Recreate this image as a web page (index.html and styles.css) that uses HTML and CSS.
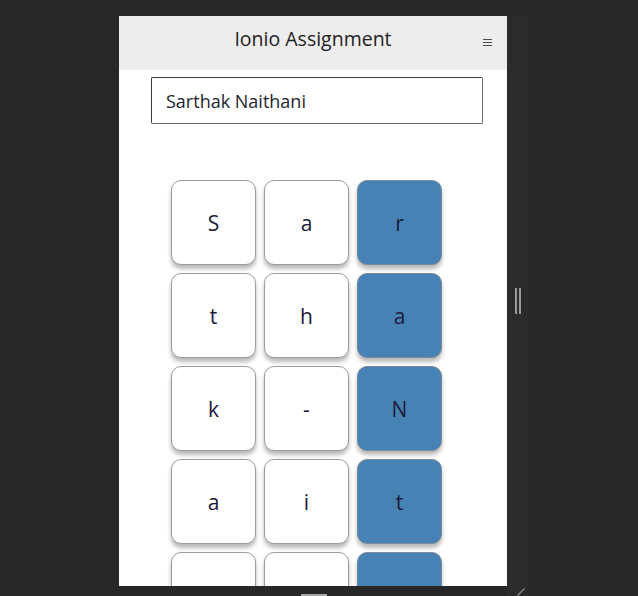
FILE: index.html
```html
<!DOCTYPE html>
<html lang="en">
<head>
<meta charset="utf-8">
<title>Ionio Assignment</title>
<link rel="stylesheet" href="styles.css">
</head>
<body>
<div class="stage">
  <div class="gutter"></div>
  <div class="column">
    <div class="device">
      <header class="appbar">
        <h1 class="title">Ionio Assignment</h1>
        <button class="menu" aria-label="Menu">
          <svg width="9" height="8" viewBox="0 0 9 8"><path d="M0 0.5H9M0 3.5H9M0 6.5H9" stroke="#4a4a4a" stroke-width="1"/></svg>
        </button>
      </header>
      <div class="field">
        <input class="name" type="text" value="Sarthak Naithani">
      </div>
      <div class="grid">
        <div class="tile">S</div><div class="tile">a</div><div class="tile blue">r</div>
        <div class="tile">t</div><div class="tile">h</div><div class="tile blue">a</div>
        <div class="tile">k</div><div class="tile">-</div><div class="tile blue">N</div>
        <div class="tile">a</div><div class="tile">i</div><div class="tile blue">t</div>
        <div class="tile"></div><div class="tile"></div><div class="tile blue"></div>
      </div>
    </div>
    <div class="bottombar"><span class="handle"></span></div>
  </div>
  <div class="strip">
    <span class="grip"><i></i><i></i></span>
    <svg class="resize" width="8" height="8" viewBox="0 0 8 8"><path d="M0.5 7.5L7.5 0.5" stroke="#8a8a8a" stroke-width="1.2"/></svg>
  </div>
</div>
</body>
</html>
```
FILE: styles.css
```css
html, body {
  margin: 0;
  padding: 0;
  background: #272727;
  height: 596px;
  overflow: hidden;
}
.stage {
  display: flex;
  padding-top: 16px;
  height: 580px;
}
.gutter {
  width: 119px;
  flex: none;
}
.column {
  width: 388px;
  flex: none;
  display: flex;
  flex-direction: column;
}
.device {
  height: 570px;
  background: #ffffff;
  overflow: hidden;
  font-family: "Open Sans", "Liberation Sans", sans-serif;
}
.appbar {
  height: 54px;
  background: #ededed;
  display: flex;
  align-items: center;
  justify-content: center;
  position: relative;
}
.title {
  margin: 0;
  font-size: 19.5px;
  font-weight: 400;
  color: #222;
  padding-bottom: 10px;
}
.menu {
  position: absolute;
  right: 15px;
  top: 23px;
  border: 0;
  padding: 0;
  background: none;
  display: block;
  line-height: 0;
}
.field {
  padding: 7px 0 0 32px;
}
.name {
  box-sizing: border-box;
  width: 332px;
  height: 47px;
  border: 1px solid #3c3c3c;
  border-right-color: #6a6a6a;
  border-bottom-color: #6a6a6a;
  border-radius: 2px;
  padding: 0 0 0 14px;
  font-family: inherit;
  font-size: 18px;
  color: #1e1e2e;
  outline: none;
}
.grid {
  display: grid;
  grid-template-columns: repeat(3, 85px);
  gap: 8px;
  margin: 56px 0 0 52px;
}
.tile {
  box-sizing: border-box;
  height: 85px;
  border: 1px solid #9c9c9c;
  border-radius: 10px;
  background: #fff;
  box-shadow: 0 4px 4px rgba(0, 0, 0, 0.28);
  display: flex;
  align-items: center;
  justify-content: center;
  font-size: 21px;
  color: #1a1a38;
}
.tile.blue {
  background: #4682b4;
  border-color: #7b8a98;
}
.bottombar {
  flex: 1;
  position: relative;
}
.handle {
  position: absolute;
  left: 182px;
  top: 8px;
  width: 26px;
  height: 2px;
  background: #a8a8a8;
}
.strip {
  width: 21px;
  flex: none;
  background: #2b2b2b;
  position: relative;
}
.grip {
  position: absolute;
  left: 8px;
  top: 272px;
  display: flex;
  gap: 2px;
}
.grip i {
  width: 2px;
  height: 26px;
  background: #9a9a9a;
}
.resize {
  position: absolute;
  left: 10px;
  bottom: 0;
}
```
